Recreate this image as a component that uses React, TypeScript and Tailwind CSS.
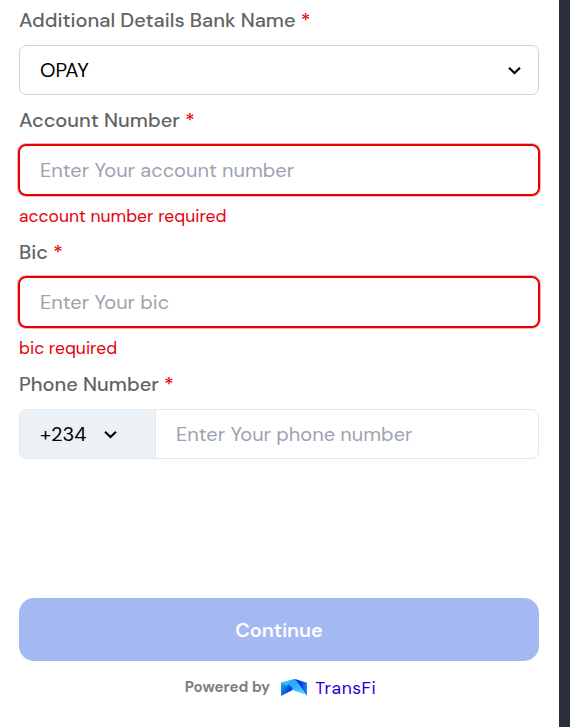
import { useState } from 'react';

function Chevron() {
  return (
    <svg className="h-[9px] w-[13px] shrink-0" viewBox="0 0 13 9" fill="none">
      <path d="M1 1.7L6.5 7L12 1.7" stroke="#000" strokeWidth="2.1" />
    </svg>
  );
}

function TransFiLogo() {
  return (
    <svg className="h-[17px] w-[26px]" viewBox="0 0 26 17">
      <defs>
        <linearGradient id="leftWing" x1="0" y1="0" x2="0.9" y2="0.7">
          <stop offset="0" stopColor="#20b4f4" />
          <stop offset="0.45" stopColor="#167be8" />
          <stop offset="1" stopColor="#0a10d0" />
        </linearGradient>
        <linearGradient id="rightWing" x1="0" y1="0" x2="1" y2="0">
          <stop offset="0" stopColor="#0818d0" />
          <stop offset="0.5" stopColor="#0a38e0" />
          <stop offset="1" stopColor="#1c8cf4" />
        </linearGradient>
        <linearGradient id="fold" x1="0.3" y1="0" x2="0.7" y2="1">
          <stop offset="0" stopColor="#1a9df8" />
          <stop offset="1" stopColor="#3ddcfb" />
        </linearGradient>
      </defs>
      <path d="M0 3.7L14 0L12 10.7L0 17Z" fill="url(#leftWing)" />
      <path d="M0 3.7L14 0L5 7Z" fill="#30bdf6" />
      <path d="M14 0L24.5 15.5L11 10.7Z" fill="url(#fold)" />
      <path d="M14 0L13 10.7L7.5 5Z" fill="#24b2f8" />
      <path d="M14 0L26 3.7V17Z" fill="url(#rightWing)" />
    </svg>
  );
}

function Label({ text }: { text: string }) {
  return (
    <label className="mb-2.5 block h-[30px] text-[20px] leading-[30px] font-medium whitespace-nowrap text-[#636363]">
      {text} <span className="text-[#e90000]">*</span>
    </label>
  );
}

export default function App() {
  const [account, setAccount] = useState('');
  const [bic, setBic] = useState('');
  const [phone, setPhone] = useState('');

  const errorInput = '-m-px block h-[52px] w-[522px] rounded-[8px] border-2 border-[#e60000] px-[19px] text-[20px] outline-none ring-1 ring-[#e60000]/30 placeholder:text-[#9ca3af]';

  return (
    <div className="flex h-[727px] w-[570px] overflow-hidden bg-white font-['DM_Sans','Inter',sans-serif]">
      <div className="flex w-[559px] flex-col pt-[5px] pr-5 pl-[19px]">
        <Label text="Additional Details Bank Name" />
        <button className="flex h-[50px] shrink-0 items-center justify-between rounded-[7px] border border-[#cbd5e1] pr-[17px] pl-5 text-[20px] text-black">
          <span>OPAY</span>
          <Chevron />
        </button>

        <div className="mt-2.5">
          <Label text="Account Number" />
          <input className={`${errorInput} pl-5`} placeholder="Enter Your account number" value={account} onChange={(e) => setAccount(e.target.value)} />
          <p className="mt-2 h-[26px] text-[17.5px] leading-[26px] text-[#e6000c]">account number required</p>
        </div>

        <div className="mt-2">
          <Label text="Bic" />
          <input className={`${errorInput} pl-5`} placeholder="Enter Your bic" value={bic} onChange={(e) => setBic(e.target.value)} />
          <p className="mt-2 h-[26px] text-[17.5px] leading-[26px] text-[#e6000c]">bic required</p>
        </div>

        <div className="mt-2">
          <Label text="Phone Number" />
          <div className="flex h-[50px] overflow-hidden rounded-[7px] border border-[#e2e8f0]">
            <button className="flex w-[136px] shrink-0 items-center gap-[17px] border-r border-[#e2e8f0] bg-[#ecf1f6] pl-5 text-[20px] text-black">
              <span className="w-[47px] text-left">+234</span>
              <Chevron />
            </button>
            <input className="min-w-0 flex-1 px-5 text-[20px] outline-none placeholder:text-[#9ca3af]" placeholder="Enter Your phone number" value={phone} onChange={(e) => setPhone(e.target.value)} />
          </div>
        </div>

        <button className="mt-[139px] h-[63px] shrink-0 rounded-[15px] bg-[#a4b8f1] text-[20px] font-semibold tracking-[-0.15px] text-white">Continue</button>

        <div className="mt-[14px] flex h-6 items-center justify-center pl-[3px]">
          <span className="mr-[11px] text-[15px] font-bold text-[#808080]">Powered by</span>
          <TransFiLogo />
          <span className="mt-[3px] ml-2 text-[17.5px] tracking-[0.55px] text-[#2000e0]">TransFi</span>
        </div>
      </div>
      <div className="flex-1 bg-[#2a2f3b]" />
    </div>
  );
}
